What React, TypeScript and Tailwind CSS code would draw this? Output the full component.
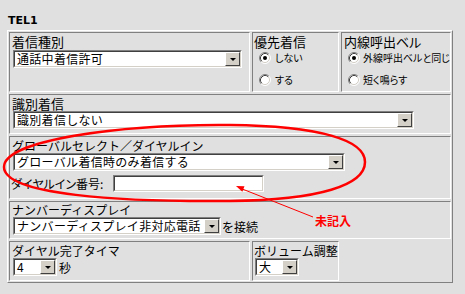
import React from "react";

const cell =
  "border border-t-[#808080] border-l-[#808080] border-b-white border-r-white";
const label = "text-[12px] leading-[15px] h-[15px] whitespace-nowrap";

function Arrow() {
  return (
    <div className="flex h-full w-[15px] shrink-0 items-center justify-center border border-t-white border-l-white border-b-[#404040] border-r-[#404040] bg-[#d4d0c8]">
      <div className="mt-[1px] h-0 w-0 border-l-[3px] border-r-[3px] border-t-[3px] border-l-transparent border-r-transparent border-t-black" />
    </div>
  );
}

function Sel({ text, className }: { text: string; className: string }) {
  return (
    <div
      className={
        "flex h-[18px] shrink-0 border border-t-[#808080] border-l-[#808080] border-b-white border-r-white " +
        className
      }
    >
      <div className="flex flex-1 items-center border border-t-[#404040] border-l-[#404040] border-b-[#d4d0c8] border-r-[#d4d0c8] bg-white">
        <span className="min-w-0 flex-1 whitespace-nowrap pl-[2px] text-[12px] leading-[14px] tracking-[0.3px]">
          {text}
        </span>
        <Arrow />
      </div>
    </div>
  );
}

function Radio({ checked }: { checked?: boolean }) {
  return (
    <svg width="12" height="12" viewBox="0 0 12 12" className="shrink-0">
      <circle cx="6" cy="6" r="5" fill="white" />
      <path d="M2.11 9.89 A5.5 5.5 0 0 1 9.89 2.11" stroke="#808080" fill="none" />
      <path d="M9.89 2.11 A5.5 5.5 0 0 1 2.11 9.89" stroke="#ffffff" fill="none" />
      <path d="M2.82 9.18 A4.5 4.5 0 0 1 9.18 2.82" stroke="#404040" fill="none" />
      <path d="M9.18 2.82 A4.5 4.5 0 0 1 2.82 9.18" stroke="#d4d0c8" fill="none" />
      {checked && <circle cx="6" cy="6" r="2" fill="black" />}
    </svg>
  );
}

export default function App() {
  return (
    <div
      className="relative h-[294px] w-[465px] overflow-hidden bg-[#e0e0e0] text-black"
      style={{ fontFamily: '"Noto Sans CJK JP", "Noto Sans", sans-serif' }}
    >
      <div className="h-[30px] pl-[8px] pt-[5px]">
        <span className="font-['DejaVu_Sans',sans-serif] text-[11px] font-bold leading-[12px]">
          TEL1
        </span>
      </div>

      <div className="ml-[7px] flex h-[253px] w-[446px] flex-col gap-[2px] border border-t-white border-l-white border-b-[#808080] border-r-[#808080] p-[1px]">
        {/* Row 1 */}
        <div className="flex h-[60px] gap-[2px]">
          <div className={cell + " w-[241px] pl-[2px] pt-[1px]"}>
            <div className={label + " text-[13px]"}>着信種別</div>
            <Sel text="通話中着信許可" className="ml-[1px] mt-[1px] w-[229px]" />
          </div>
          <div className={cell + " w-[87px] pl-[1px] pt-[1px]"}>
            <div className={label + " text-[13px]"}>優先着信</div>
            <div className="ml-[5px] mt-[3px] flex items-center gap-[4px] text-[10px] leading-[12px] [font-feature-settings:'palt']">
              <Radio checked />
              <span>しない</span>
            </div>
            <div className="ml-[5px] mt-[10px] flex items-center gap-[4px] text-[10px] leading-[12px] [font-feature-settings:'palt']">
              <Radio />
              <span>する</span>
            </div>
          </div>
          <div className={cell + " flex-1 pl-[2px] pt-[1px]"}>
            <div className={label + " [font-feature-settings:'palt'] text-[13px]"}>内線呼出ベル</div>
            <div className="ml-[4px] mt-[3px] flex items-center gap-[3px] text-[10px] leading-[12px] [font-feature-settings:'palt'] whitespace-nowrap">
              <Radio checked />
              <span>外線呼出ベルと同じ</span>
            </div>
            <div className="ml-[4px] mt-[10px] flex items-center gap-[3px] text-[10px] leading-[12px] [font-feature-settings:'palt']">
              <Radio />
              <span>短く鳴らす</span>
            </div>
          </div>
        </div>

        {/* Row 2 */}
        <div className={cell + " h-[40px] pl-[2px] pt-[1px]"}>
          <div className={label + " text-[13px]"}>識別着信</div>
          <Sel text="識別着信しない" className="ml-[1px] w-[401px]" />
        </div>

        {/* Row 3 */}
        <div className={cell + " h-[63px] pl-[2px] pt-[1px]"}>
          <div className={label}>グローバルセレクト／ダイヤルイン</div>
          <Sel text="グローバル着信時のみ着信する" className="ml-[1px] w-[332px]" />
          <div className="mt-[4px] flex items-center">
            <span className="text-[12px] leading-[15px] whitespace-nowrap [font-feature-settings:'palt'] w-[102px] -ml-[1px]">
              ダイヤルイン番号:
            </span>
            <div className="h-[17px] w-[151px] border border-t-[#808080] border-l-[#808080] border-b-white border-r-white">
              <div className="h-full w-full border border-t-[#404040] border-l-[#404040] border-b-[#d4d0c8] border-r-[#d4d0c8] bg-white" />
            </div>
          </div>
        </div>

        {/* Row 4 */}
        <div className={cell + " h-[38px] pl-[2px] pt-[0px]"}>
          <div className={label}>ナンバーディスプレイ</div>
          <div className="flex items-center">
            <Sel text="ナンバーディスプレイ非対応電話" className="ml-[1px] w-[208px]" />
            <span className="ml-[1px] text-[12px] leading-[15px]">を接続</span>
          </div>
        </div>

        {/* Row 5 */}
        <div className="flex h-[40px] gap-[2px]">
          <div className={cell + " w-[241px] pl-[2px] pt-[1px]"}>
            <div className={label}>ダイヤル完了タイマ</div>
            <div className="flex items-center">
              <Sel text="4" className="ml-[1px] w-[44px]" />
              <span className="ml-[2px] text-[12px] leading-[15px]">秒</span>
            </div>
          </div>
          <div className={cell + " w-[87px] pl-[1px] pt-[1px]"}>
            <div className={label}>ボリューム調整</div>
            <Sel text="大" className="ml-[1px] w-[44px]" />
          </div>
        </div>
      </div>

      {/* Annotation overlay */}
      <svg
        className="pointer-events-none absolute left-0 top-0"
        width="465"
        height="294"
        viewBox="0 0 465 294"
      >
        <path
          d="M 4 167 C 4 140, 120 124, 230 125 C 320 126, 365 140, 365 162 C 365 185, 320 200, 230 201 C 120 202, 4 195, 4 167 Z"
          stroke="#ff0000"
          strokeWidth="2.5"
          fill="none"
        />
        <line x1="313" y1="217" x2="241" y2="188.5" stroke="#ff0000" strokeWidth="1" />
        <polygon points="236,186 244.5,186.2 242.3,191.8" fill="#ff0000" />
      </svg>
      <div className="absolute left-[315px] top-[213px] text-[12px] font-bold leading-[16px] text-[#ff0000]">
        未記入
      </div>
    </div>
  );
}
